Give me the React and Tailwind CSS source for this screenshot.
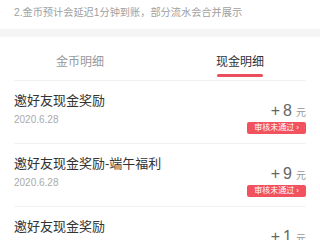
import React from "react";

const font = { fontFamily: '"Liberation Sans", "Noto Sans CJK SC", sans-serif' };

function Row({ title, date, amount }) {
  return (
    <div className="flex h-[63px] justify-between border-b border-[#f2f2f2]">
      <div className="flex flex-col pt-[11px]">
        <div className="text-[13px] leading-[18px] text-[#333]">{title}</div>
        <div className="mt-[3px] text-[10px] leading-[14px] text-[#aaa]">{date}</div>
      </div>
      <div className="flex flex-col items-end pt-[22px]">
        <div className="flex items-baseline text-[16px] leading-[16px] text-[#666]">
          <span>+</span>
          <span className="ml-[3px]">{amount}</span>
          <span className="ml-[4px] text-[10px] text-[#999]">元</span>
        </div>
        <div className="mt-[1px] flex h-[12px] w-[59px] items-center justify-center rounded-[2px] bg-[#f2525e] text-[8px] leading-[12px] text-white">
          <span>审核未通过</span>
          <span className="ml-[2px]">›</span>
        </div>
      </div>
    </div>
  );
}

export default function App() {
  return (
    <div className="h-[240px] w-[320px] overflow-hidden bg-white" style={font}>
      <div className="h-[29px] overflow-hidden bg-white px-[14px]">
        <div className="-mt-[15px] text-[10.2px] leading-[16px] text-[#a0a0a0]">
          <div>1.金币每日凌晨自动兑换为现金并存入钱包</div>
          <div className="mt-[4px]">2.金币预计会延迟1分钟到账，部分流水会合并展示</div>
        </div>
      </div>
      <div className="h-[8px] bg-[#f5f5f5]" />
      <div className="flex h-[43px]">
        <div className="flex flex-1 flex-col items-center pt-[17px]">
          <div className="text-[12px] leading-[16px] text-[#999]">金币明细</div>
        </div>
        <div className="flex flex-1 flex-col items-center pt-[17px]">
          <div className="text-[12px] leading-[16px] text-[#333]">现金明细</div>
          <div className="mt-[4px] h-[3px] w-[46px] rounded-full bg-[#e9505b]" />
        </div>
      </div>
      <div className="mx-[14px] h-px bg-[#f2f2f2]" />
      <div className="mx-[14px]">
        <Row title="邀好友现金奖励" date="2020.6.28" amount="8" />
        <Row title="邀好友现金奖励-端午福利" date="2020.6.28" amount="9" />
        <Row title="邀好友现金奖励" date="2020.6.28" amount="1" />
      </div>
    </div>
  );
}
